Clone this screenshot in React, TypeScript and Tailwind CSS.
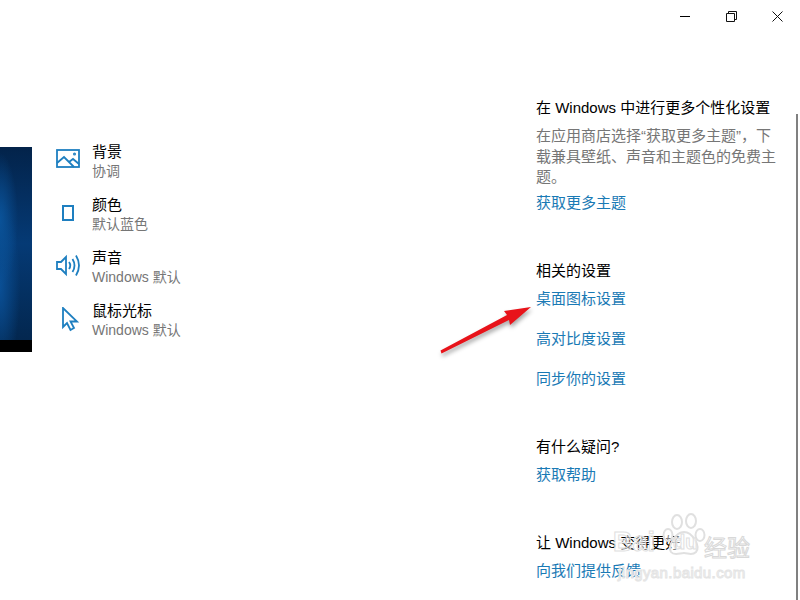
const themeItems = [
  { title: '背景', sub: '协调', icon: 'picture' },
  { title: '颜色', sub: '默认蓝色', icon: 'color' },
  { title: '声音', sub: 'Windows 默认', icon: 'sound' },
  { title: '鼠标光标', sub: 'Windows 默认', icon: 'cursor' },
];

function ItemIcon({ name }: { name: string }) {
  return (
    <svg width="26" height="26" viewBox="0 0 26 26" fill="none" stroke="#1e7fc0" strokeWidth="1.8" className="shrink-0">
      {name === 'picture' && (
        <>
          <rect x="1" y="2" width="22" height="17" />
          <path d="M1 15 L8 9 L18 19 M13 14 L17 11 L23 16" />
          <circle cx="18.5" cy="6" r="0.6" />
        </>
      )}
      {name === 'color' && <rect x="7" y="5" width="10" height="14" strokeWidth="2" />}
      {name === 'sound' && (
        <>
          <path d="M1 8 H5 L10 3 V20 L5 15 H1 Z" />
          <path d="M13 8 Q15.5 11.5 13 15 M16.5 5 Q20.5 11.5 16.5 18 M20 1.5 Q26 11.5 20 21.5" />
        </>
      )}
      {name === 'cursor' && <path d="M7 1 V20 L11 16 L14.5 23 L18 21 L14.5 14.5 H21 Z" />}
    </svg>
  );
}

export default function App() {
  return (
    <div className="relative flex h-[600px] w-[800px] overflow-hidden bg-white font-['Liberation_Sans','Noto_Sans_CJK_SC',sans-serif]">
      {/* Title bar buttons */}
      <div className="absolute right-0 top-0 flex h-8 items-center">
        <div className="flex w-[46px] justify-center">
          <div className="h-px w-2.5 bg-black" />
        </div>
        <div className="flex w-[46px] justify-center">
          <svg width="11" height="11" viewBox="0 0 11 11" fill="none" stroke="#111" strokeWidth="1">
            <path d="M0.5 2.5 H8.5 V10.5 H0.5 Z M2.5 2.5 V0.5 H10.5 V8.5 H8.5" />
          </svg>
        </div>
        <div className="flex w-[46px] justify-center">
          <svg width="11" height="11" viewBox="0 0 11 11" stroke="#111" strokeWidth="1">
            <path d="M0.5 0.5 L10.5 10.5 M10.5 0.5 L0.5 10.5" />
          </svg>
        </div>
      </div>

      {/* Left side: theme preview and items */}
      <div className="flex w-[536px] shrink-0 items-start pt-[134px]">
        <div className="mt-[13px] h-[205px] w-8 shrink-0 border-b-[12px] border-black bg-[radial-gradient(ellipse_at_0%_38%,#0a5298_0%,transparent_40%),radial-gradient(ellipse_at_0%_72%,#0a4f95_0%,transparent_45%),linear-gradient(to_bottom,#03234a,#053a75_50%,#03274f)]" />
        <div className="ml-6 flex flex-col">
          {themeItems.map((item) => (
            <div key={item.title} className="flex h-[53px] items-center gap-[10px]">
              <ItemIcon name={item.icon} />
              <div className="flex flex-col">
                <span className="text-[15px] leading-[20px] text-black">{item.title}</span>
                <span className="text-[14px] leading-[18px] text-[#767676]">{item.sub}</span>
              </div>
            </div>
          ))}
        </div>
      </div>

      {/* Right side: links */}
      <div className="flex w-[245px] flex-col pt-[98px] text-[15px]">
        <p className="leading-[20px] text-black">在 Windows 中进行更多个性化设置</p>
        <p className="mt-[8px] leading-[20.5px] text-[#767676]">在应用商店选择“获取更多主题”，下载兼具壁纸、声音和主题色的免费主题。</p>
        <a className="mt-[5px] leading-[20px] text-[#1a7ab5]">获取更多主题</a>

        <p className="mt-[48px] leading-[20px] text-black">相关的设置</p>
        <a className="mt-[8px] leading-[20px] text-[#1a7ab5]">桌面图标设置</a>
        <a className="mt-[20px] leading-[20px] text-[#1a7ab5]">高对比度设置</a>
        <a className="mt-[20px] leading-[20px] text-[#1a7ab5]">同步你的设置</a>

        <p className="mt-[48px] leading-[20px] text-black">有什么疑问?</p>
        <a className="mt-[8px] leading-[20px] text-[#1a7ab5]">获取帮助</a>

        <p className="mt-[48px] leading-[20px] text-black">让 Windows 变得更好</p>
        <a className="mt-[8px] leading-[20px] text-[#1a7ab5]">向我们提供反馈</a>
      </div>

      {/* Scrollbar */}
      <div className="absolute right-[2px] top-[114px] h-[486px] w-[2px] bg-[#808080]" />

      {/* Red annotation arrow */}
      <svg className="absolute left-[436px] top-[300px] drop-shadow-[1px_3px_2px_rgba(0,0,0,0.35)]" width="100" height="60" viewBox="0 0 100 60">
        <path d="M4.5 50.5 L5.5 53.5 L73 20 L74 25 L95 7 L68 11 L71 15 Z" fill="#e8131a" />
      </svg>

      {/* Watermark */}
      <svg className="absolute left-[660px] top-[510px]" width="50" height="50" viewBox="0 0 50 50" fill="#ffffff" fillOpacity="0.5" stroke="#e0e0e0" strokeWidth="2">
        <ellipse cx="17" cy="12" rx="5" ry="7" />
        <ellipse cx="31" cy="11" rx="5" ry="7" />
        <ellipse cx="8" cy="25" rx="4.5" ry="6" />
        <ellipse cx="40" cy="25" rx="4.5" ry="6" />
        <path d="M24 22 C32 22 41 36 36 42 C32 46 28 43 24 43 C20 43 14 46 11 42 C7 36 16 22 24 22 Z" />
      </svg>
      <span className="absolute left-[613px] top-[527px] text-[27px] font-bold leading-[30px] text-white/50 [-webkit-text-stroke:1px_#e0e0e0]">Bai</span>
      <span className="absolute left-[673px] top-[530px] text-[20px] font-bold leading-[24px] text-white/50 [-webkit-text-stroke:1px_#e0e0e0]">du</span>
      <span className="absolute left-[704px] top-[535px] text-[23px] leading-[26px] text-white [-webkit-text-stroke:1px_#d8d8d8]">经验</span>
      <span className="absolute left-[618px] top-[564px] text-[15px] leading-[18px] tracking-[0.4px] text-white/50 [-webkit-text-stroke:1px_#e4e4e4]">jingyan.baidu.com</span>
    </div>
  );
}
